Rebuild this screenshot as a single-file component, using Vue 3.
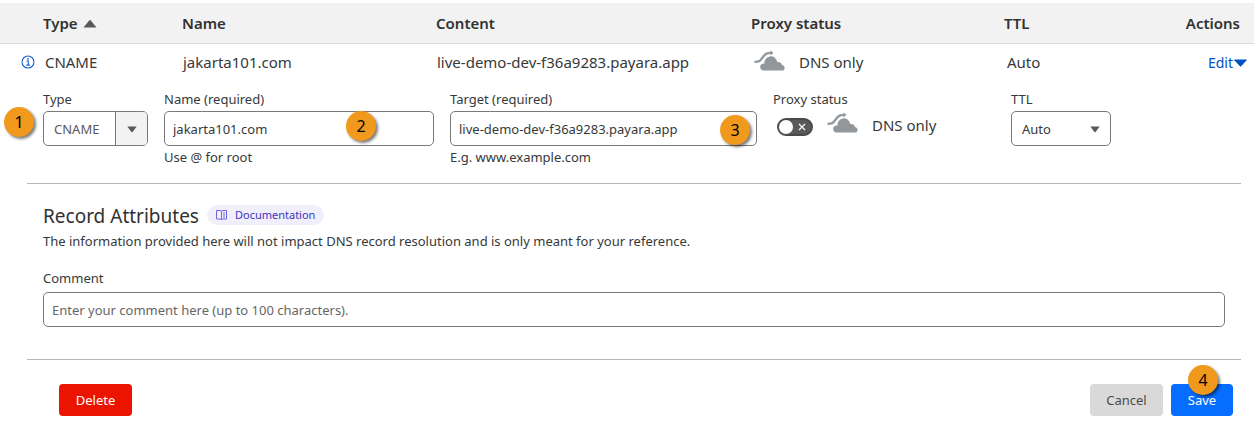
<script setup>
import { ref } from 'vue'

const columns = ['Name', 'Content', 'Proxy status', 'TTL']
const type = ref('CNAME')
const name = ref('jakarta101.com')
const target = ref('live-demo-dev-f36a9283.payara.app')
const proxied = ref(false)
const ttl = ref('Auto')
const comment = ref('')
</script>

<template>
  <main class="page">
    <table class="records">
      <colgroup>
        <col class="col-type" />
        <col class="col-name" />
        <col />
        <col class="col-proxy" />
        <col class="col-ttl" />
        <col class="col-actions" />
      </colgroup>
      <thead>
        <tr>
          <th class="first" scope="col" aria-sort="ascending">
            Type
            <svg class="sort" width="14" height="8" viewBox="0 0 14 8" aria-hidden="true"><path d="M.5 7.5 6.200.6a1 1 0 0 1 1.600 0L13.500 7.500z" fill="#595959" /></svg>
          </th>
          <th v-for="column in columns" :key="column" scope="col">{{ column }}</th>
          <th class="last" scope="col">Actions</th>
        </tr>
      </thead>
      <tbody>
        <tr class="record">
          <td class="type-cell">
            <svg class="info" width="14" height="14" viewBox="0 0 14 14" aria-hidden="true">
              <circle cx="7" cy="7" r="6" fill="none" stroke="#1a5fd0" stroke-width="1.1" />
              <path d="M5.500 6H7.300v4M5.300 10.100h3.600" fill="none" stroke="#1a5fd0" stroke-width="1.1" />
              <circle cx="7" cy="3.9" r=".9" fill="#1a5fd0" />
            </svg>
            CNAME
          </td>
          <td>{{ name }}</td>
          <td>{{ target }}</td>
          <td>
            <span class="status">
              <svg class="cloud" width="32" height="21" viewBox="0 0 32 21" aria-hidden="true">
                <path d="M.5 11.800C6.500 11.800 6.500 10.300 9.200 6.700 11.500 3.600 13 2.900 17.500 2.900" fill="none" stroke="#92979b" stroke-width="2.300" />
                <path d="M16.600.3 19.400 2.900 16.600 5.500z" fill="#92979b" />
                <path d="M9 20.500A3.500 3.500 0 0 1 6.200 17 3.200 3.200 0 0 1 10.400 13.700 6.200 6.200 0 0 1 23.300 12a4.200 4.200 0 0 1 4.700 3 3 3 0 0 1 1.300 5.500z" fill="#92979b" />
              </svg>
              DNS only
            </span>
          </td>
          <td class="ttl-cell">Auto</td>
          <td class="edit-cell">
            <button class="edit" type="button" aria-expanded="true">
              Edit<svg width="13" height="8" viewBox="0 0 13 8" aria-hidden="true"><path d="M.5.5h12q.4.300.1.700L7.100 7.300a.9.900 0 0 1-1.200 0L.4 1.200Q.1.800.5.5z" fill="#0051c3" /></svg>
            </button>
          </td>
        </tr>
      </tbody>
    </table>

    <form class="editor" @submit.prevent>
      <section class="fields">
        <div class="field">
          <label for="type">Type</label>
          <div class="control split">
            <select id="type" v-model="type"><option>CNAME</option></select>
            <span class="caret"><svg width="10" height="7" viewBox="0 0 10 7" aria-hidden="true"><path d="M.3.5h9.400L5.800 5.800q-.8.900-1.600 0z" fill="#595959" /></svg></span>
            <span class="badge one">1</span>
          </div>
        </div>
        <div class="field">
          <label for="name">Name (required)</label>
          <div class="control">
            <input id="name" v-model="name" type="text" aria-describedby="name-help" />
            <span class="badge two">2</span>
          </div>
          <small id="name-help">Use @ for root</small>
        </div>
        <div class="field">
          <label for="target">Target (required)</label>
          <div class="control">
            <input id="target" v-model="target" type="text" aria-describedby="target-help" />
            <span class="badge three">3</span>
          </div>
          <small id="target-help">E.g. www.example.com</small>
        </div>
        <div class="field">
          <label for="proxied">Proxy status</label>
          <div class="proxy">
            <span class="switch">
              <input id="proxied" v-model="proxied" type="checkbox" role="switch" />
              <svg width="8" height="8" viewBox="0 0 8 8" aria-hidden="true"><path d="m1 1 6 6M7 1 1 7" stroke="#fff" stroke-width="1.2" /></svg>
            </span>
            <span class="status">
              <svg class="cloud" width="32" height="21" viewBox="0 0 32 21" aria-hidden="true">
                <path d="M.5 11.800C6.500 11.800 6.500 10.300 9.200 6.700 11.500 3.600 13 2.900 17.500 2.900" fill="none" stroke="#92979b" stroke-width="2.300" />
                <path d="M16.600.3 19.400 2.900 16.600 5.500z" fill="#92979b" />
                <path d="M9 20.500A3.500 3.500 0 0 1 6.200 17 3.200 3.200 0 0 1 10.400 13.700 6.200 6.200 0 0 1 23.300 12a4.200 4.200 0 0 1 4.700 3 3 3 0 0 1 1.300 5.500z" fill="#92979b" />
              </svg>
              DNS only
            </span>
          </div>
        </div>
        <div class="field">
          <label for="ttl">TTL</label>
          <div class="control ttl">
            <select id="ttl" v-model="ttl"><option>Auto</option></select>
            <span class="caret"><svg width="10" height="7" viewBox="0 0 10 7" aria-hidden="true"><path d="M.3.5h9.400L5.800 5.800q-.8.900-1.600 0z" fill="#595959" /></svg></span>
          </div>
        </div>
      </section>

      <section class="attributes">
        <div class="heading">
          <h2>Record Attributes</h2>
          <a class="docs" href="#">
            <svg width="11" height="10" viewBox="0 0 11 10" aria-hidden="true">
              <path d="M.5.5H4l1.500.700L7 .5h3.500v8.500H7l-1.500.700L4 9H.5zM5.500 1.200v8.500" fill="none" stroke="#6f65e4" />
              <path d="M7 3h2M7 5h2M7 7h2" stroke="#6f65e4" />
            </svg>
            Documentation
          </a>
        </div>
        <p>The information provided here will not impact DNS record resolution and is only meant for your reference.</p>
        <div class="field">
          <label for="comment">Comment</label>
          <div class="control">
            <input id="comment" v-model="comment" type="text" placeholder="Enter your comment here (up to 100 characters)." />
          </div>
        </div>
      </section>

      <footer class="actions">
        <button class="button delete" type="button">Delete</button>
        <button class="button cancel" type="button">Cancel</button>
        <div class="save-wrap">
          <button class="button save" type="submit">Save</button>
          <span class="badge four">4</span>
        </div>
      </footer>
    </form>
  </main>
</template>

<style>
body {
  background: #fff;
}
</style>

<style scoped>
.page {
  padding-top: 3px;
  color: #36393a;
  font: 13px/20px "Noto Sans", "Open Sans", sans-serif;
}
.records {
  width: 100%;
  table-layout: fixed;
  border-collapse: separate;
  border-spacing: 0;
}
.col-type { width: 182px; }
.col-name { width: 254px; }
.col-proxy { width: 253px; }
.col-ttl { width: 130px; }
.col-actions { width: 120px; }
th {
  height: 40px;
  padding: 0;
  border-bottom: 1px solid #d9d9d9;
  background: #f2f2f2;
  color: #313131;
  font-size: 15px;
  font-weight: 600;
  text-align: left;
}
th.first { padding-left: 43px; }
th.last {
  padding-right: 14px;
  text-align: right;
}
.sort {
  margin-left: 1px;
  vertical-align: 1px;
}
td {
  height: 36px;
  padding: 0 0 2px 1px;
  font-size: 15px;
  white-space: nowrap;
}
td.type-cell { padding-left: 21px; }
td.ttl-cell { padding-left: 3px; }
.info {
  margin-right: 6px;
  vertical-align: -1px;
}
.status {
  display: flex;
  align-items: center;
  gap: 13px;
  font-size: 15px;
}
td .status { padding-left: 2px; }
.cloud {
  flex: none;
  margin-bottom: 4px;
}
td.edit-cell {
  padding-right: 7px;
  text-align: right;
}
.edit {
  padding: 0;
  border: 0;
  background: none;
  color: #0051c3;
  font: inherit;
  font-size: 14px;
}
.edit svg {
  margin-left: 1px;
  vertical-align: 1px;
}

.editor {
  padding: 0 13px 0 27px;
}
.fields {
  display: grid;
  grid-template-columns: 105px 270fr 307fr 222px 214px;
  gap: 16px;
  padding: 7px 16px 16px;
  border-bottom: 1px solid #b6b6b6;
}
.field {
  display: flex;
  flex-direction: column;
}
.field label { margin-bottom: 2px; }
.field small {
  margin-top: 1px;
  font-size: 13px;
}
.control {
  position: relative;
}
.control input,
.control select {
  display: block;
  box-sizing: border-box;
  width: 100%;
  height: 35px;
  margin: 0;
  padding: 0 8px;
  border: 1px solid #797979;
  border-radius: 5px;
  background: #fff;
  color: #36393a;
  font: inherit;
  appearance: none;
}
.control select { padding-left: 10px; }
.split select { color: #595959; }
.control input::placeholder {
  color: #666;
  opacity: 1;
}
.ttl { width: 100px; }
.caret {
  position: absolute;
  inset: 1px 1px 1px auto;
  display: flex;
  align-items: center;
  justify-content: center;
  box-sizing: border-box;
  width: 30px;
  padding-top: 2px;
  border-radius: 0 4px 4px 0;
  pointer-events: none;
}
.split .caret {
  width: 32px;
  border-left: 1px solid #797979;
  background: #f2f2f2;
}
.badge {
  position: absolute;
  z-index: 1;
  width: 30px;
  border-radius: 50%;
  background: #f0991c;
  box-shadow: 2px 2px 3px #0008;
  color: #000;
  font-size: 16px;
  line-height: 30px;
  text-align: center;
  pointer-events: none;
}
.one { top: -4px; left: -39px; }
.two { top: 0; right: 58px; }
.three { top: 4px; right: 7px; }
.four { top: -19px; left: 17px; }

.proxy {
  display: flex;
  align-items: flex-start;
  gap: 14px;
  padding: 1px 0 0 4px;
}
.switch {
  position: relative;
  display: flex;
  padding-top: 6px;
}
.switch input {
  width: 36px;
  height: 18px;
  margin: 0;
  border: 2px solid #4a4a4a;
  border-radius: 9px;
  background: #595959;
  appearance: none;
}
.switch input::before {
  display: block;
  width: 14px;
  height: 14px;
  border-radius: 50%;
  background: #fff;
  content: "";
}
.switch svg {
  position: absolute;
  top: 11px;
  right: 7px;
  pointer-events: none;
}

.attributes {
  padding: 19px 16px 32px;
  border-bottom: 1px solid #b6b6b6;
}
.heading {
  display: flex;
  align-items: flex-start;
  gap: 8px;
}
h2 {
  margin: 0;
  color: #313131;
  font-size: 19px;
  font-weight: 400;
  line-height: 27px;
}
.docs {
  display: flex;
  align-items: center;
  gap: 8px;
  margin-top: 2px;
  padding: 0 9px;
  border-radius: 10px;
  background: #f1effc;
  color: #3f35b5;
  font-size: 11px;
  text-decoration: none;
}
p {
  margin: 1px 0 17px;
}
.attributes .field label { margin-bottom: 4px; }
.actions {
  display: flex;
  gap: 8px;
  padding: 24px 8px 12px 32px;
}
.button {
  min-width: 73px;
  height: 32px;
  padding: 0 15px;
  border: 0;
  border-radius: 4px;
  color: #fff;
  font: inherit;
}
.delete {
  margin-right: auto;
  background: #eb1400;
}
.cancel {
  background: #d9d9d9;
  color: #4a4a4a;
}
.save {
  min-width: 62px;
  background: #056dff;
}
.save-wrap {
  position: relative;
}
</style>
